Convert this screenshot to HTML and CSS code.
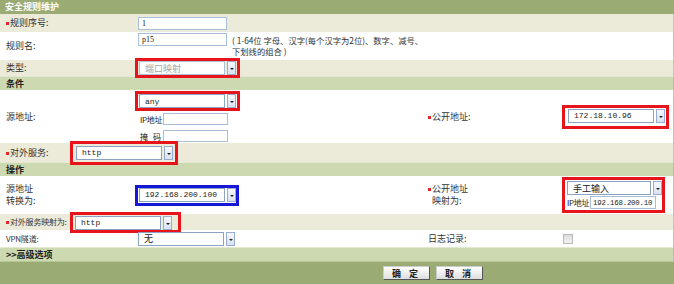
FILE: index.html
```html
<!DOCTYPE html>
<html>

<head>
    <meta charset="UTF-8">
    <meta name="viewport" content="width=device-width, initial-scale=1.0">
    <title>安全规则维护</title>
    <link rel="stylesheet" href="styles.css">
</head>

<body>
    <div class="panel">
        <div class="title">安全规则维护</div>

        <div class="row alt h18">
            <div class="lbl"><i class="req"></i>规则序号:</div>
            <div class="ctl"><span class="txt w89">1</span></div>
        </div>

        <div class="row h28">
            <div class="lbl">规则名:</div>
            <div class="ctl ctl-top">
                <span class="txt w89">p15</span>
                <span class="hint">( 1-64位 字母、汉字(每个汉字为2位)、数字、减号、<br>下划线的组合 )</span>
            </div>
        </div>

        <div class="row alt h16">
            <div class="lbl">类型:</div>
            <div class="ctl">
                <span class="mark">
                    <span class="sel disabled"><span class="sel-box w86">端口映射</span><span class="sel-btn"></span></span>
                </span>
            </div>
        </div>

        <div class="section">条件</div>

        <div class="row h53">
            <div class="lbl">源地址:</div>
            <div class="ctl ctl-stack">
                <span class="mark">
                    <span class="sel"><span class="sel-box w86 mono">any</span><span class="sel-btn"></span></span>
                </span>
                <div class="sub"><span class="sub-lbl">IP地址</span><span class="txt w65"></span></div>
                <div class="sub"><span class="sub-lbl spaced">掩码</span><span class="txt w65"></span></div>
            </div>
            <div class="lbl2"><i class="req"></i>公开地址:</div>
            <div class="ctl2">
                <span class="mark pad-pub">
                    <span class="sel"><span class="sel-box w86 mono">172.18.10.96</span><span class="sel-btn"></span></span>
                </span>
            </div>
        </div>

        <div class="row alt h19">
            <div class="lbl short"><i class="req"></i>对外服务:</div>
            <div class="ctl">
                <span class="mark pad-svc">
                    <span class="sel"><span class="sel-box w86 mono">http</span><span class="sel-btn"></span></span>
                </span>
            </div>
        </div>

        <div class="section">操作</div>

        <div class="row h38">
            <div class="lbl">源地址<br>转换为:</div>
            <div class="ctl">
                <span class="mark blue">
                    <span class="sel"><span class="sel-box w86 mono">192.168.200.100</span><span class="sel-btn"></span></span>
                </span>
            </div>
            <div class="lbl2 pair"><i class="req"></i>公开地址<br><span class="indent">映射为:</span></div>
            <div class="ctl2">
                <span class="mark pad-map">
                    <span class="sel"><span class="sel-box w84">手工输入</span><span class="sel-btn"></span></span>
                    <span class="sub tight"><span class="sub-lbl">IP地址</span><span class="txt w66 mono ip">192.168.200.10</span></span>
                </span>
            </div>
        </div>

        <div class="row alt h16">
            <div class="lbl short small"><i class="req"></i>对外服务映射为:</div>
            <div class="ctl">
                <span class="mark pad-svcmap">
                    <span class="sel"><span class="sel-box w86 mono">http</span><span class="sel-btn"></span></span>
                </span>
            </div>
        </div>

        <div class="row h17">
            <div class="lbl small">VPN隧道:</div>
            <div class="ctl">
                <span class="sel"><span class="sel-box w86">无</span><span class="sel-btn"></span></span>
            </div>
            <div class="lbl2">日志记录:</div>
            <div class="ctl2"><span class="check"></span></div>
        </div>

        <div class="section">&gt;&gt;高级选项</div>

        <div class="footer">
            <button class="btn">确 定</button>
            <button class="btn">取 消</button>
        </div>
    </div>
</body>

</html>
```

FILE: styles.css
```css
body {
    margin: 0;
    padding: 0;
    font-family: "Noto Sans CJK SC", "DejaVu Sans", sans-serif;
    font-size: 9px;
    color: #333;
    background-color: #fff;
}

.panel {
    width: 674px;
    height: 284px;
    overflow: hidden;
}

.title {
    height: 14px;
    line-height: 14px;
    padding-left: 5px;
    background-color: #9bab74;
    color: #fff;
    font-weight: bold;
}

.section {
    box-sizing: border-box;
    height: 14px;
    line-height: 13px;
    padding-left: 6px;
    background-color: #cdd9b1;
    border-top: 1px solid #e2e9d0;
    border-right: 1px solid #b9bfae;
    font-weight: bold;
    color: #222;
}

.row {
    box-sizing: border-box;
    display: flex;
    align-items: center;
    padding-left: 6px;
    white-space: nowrap;
    background-color: #fff;
    border-right: 1px solid #c4c4b8;
}

.row.alt {
    background-color: #ecead9;
}

.h16 { height: 16px; }
.h17 { height: 17px; }
.h18 { height: 18px; }
.h19 { height: 19px; }
.h28 { height: 28px; }
.h38 { height: 38px; }
.h53 { height: 53px; }

.lbl {
    width: 132px;
    flex-shrink: 0;
    line-height: 12px;
}

.lbl.short {
    width: 67px;
}

.lbl.small {
    font-size: 8px;
    letter-spacing: -0.2px;
}

.ctl {
    width: 290px;
    flex-shrink: 0;
    display: flex;
    align-items: center;
}

.ctl-top {
    align-self: flex-start;
    align-items: flex-start;
    padding-top: 1px;
}

.ctl-stack {
    align-self: flex-start;
    flex-direction: column;
    align-items: flex-start;
    gap: 5px;
    padding-top: 4px;
}

.lbl2 {
    width: 137px;
    flex-shrink: 0;
    line-height: 12px;
}

.lbl2 .indent {
    padding-left: 4px;
}

.ctl2 {
    flex: 1;
    display: flex;
    align-items: center;
}

.req {
    display: inline-block;
    width: 3px;
    height: 3px;
    margin-right: 1px;
    background-color: #e3262a;
    vertical-align: middle;
}

.txt {
    box-sizing: border-box;
    display: inline-flex;
    align-items: center;
    height: 13px;
    padding: 0 3px;
    border: 1px solid #a9bfd9;
    background-color: #fff;
    font-family: "Liberation Serif", serif;
    font-size: 8px;
    color: #222;
    overflow: hidden;
}

.txt.ip {
    padding: 0 2px;
    font-size: 7.4px;
    letter-spacing: -0.2px;
}

.w65 { width: 65px; height: 12px; }
.w66 { width: 66px; }
.w84 { width: 84px; }
.w86 { width: 86px; }
.w89 { width: 89px; }

.hint {
    margin-left: 5px;
    margin-top: 2px;
    line-height: 11px;
    font-size: 8.3px;
}

.mark {
    display: inline-flex;
    flex-direction: column;
    padding: 0 1px;
    outline: 3px solid #e8141b;
}

.mark.blue {
    outline-color: #1717d8;
    padding: 0 0 1px 1px;
}

.pad-pub { padding: 1px 1px 3px 3px; }
.pad-svc { padding: 2px 2px 2px 3px; }
.pad-map { padding: 1px 0 1px 2px; gap: 1px; }
.pad-svcmap { padding: 1px 6px 0 2px; }

.sel {
    display: inline-flex;
    align-items: center;
    gap: 2px;
}

.sel-box {
    box-sizing: border-box;
    display: inline-flex;
    align-items: center;
    height: 14px;
    padding: 0 5px;
    border: 1px solid #8aa3c3;
    background-color: #fff;
    color: #222;
}

.sel-btn {
    box-sizing: border-box;
    display: inline-flex;
    align-items: center;
    justify-content: center;
    width: 9px;
    height: 14px;
    border: 1px solid #97acd0;
    background: linear-gradient(#f6f8fc, #d9e2f1);
}

.sel-btn::after {
    content: "";
    margin-top: 2px;
    border-left: 2px solid transparent;
    border-right: 2px solid transparent;
    border-top: 2px solid #222;
}

.sel.disabled .sel-box {
    color: #a5a5a5;
    border-color: #aebfd6;
}

.mono {
    font-family: "Liberation Mono", monospace;
    font-size: 8px;
}

.sub {
    display: flex;
    align-items: center;
    padding-left: 2px;
}

.sub.tight {
    padding-left: 0;
}

.sub-lbl {
    width: 23px;
    font-size: 8px;
    letter-spacing: -0.3px;
    color: #222;
}

.sub-lbl.spaced {
    letter-spacing: 5px;
}

.check {
    display: inline-block;
    box-sizing: border-box;
    width: 10px;
    height: 10px;
    margin-left: -2px;
    border: 1px solid #b8b8b8;
    background: linear-gradient(#dcdcdc, #f4f4f4);
}

.footer {
    box-sizing: border-box;
    height: 23px;
    display: flex;
    align-items: center;
    gap: 6px;
    padding-left: 383px;
    background-color: #9bab74;
    border-top: 1px solid #b8c596;
}

.btn {
    box-sizing: border-box;
    width: 47px;
    height: 14px;
    padding: 0;
    border: 1px solid #555;
    border-top-color: #ccc;
    border-left-color: #ccc;
    background: linear-gradient(#ffffff, #dedede);
    font-family: "Noto Sans CJK SC", sans-serif;
    font-size: 9px;
    font-weight: bold;
    letter-spacing: 3px;
    color: #222;
}
```
